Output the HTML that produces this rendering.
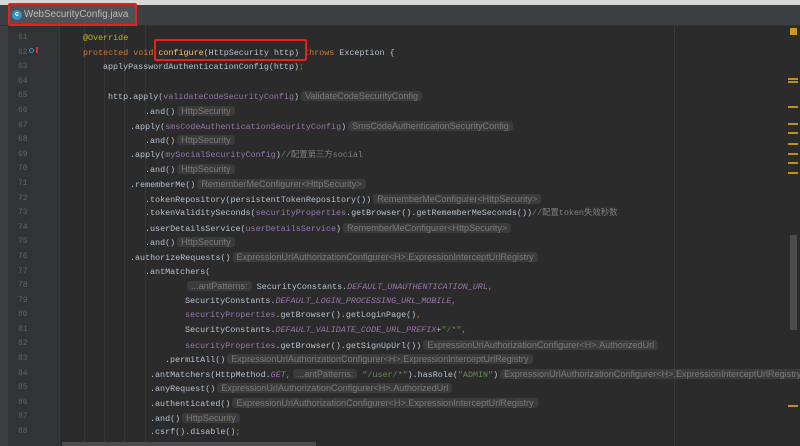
<!DOCTYPE html>
<html><head><meta charset="utf-8"><style>
*{margin:0;padding:0;box-sizing:border-box}
body{width:800px;height:446px;overflow:hidden;background:#2b2b2b;position:relative;font-family:"Liberation Mono","Noto Sans CJK SC",monospace;font-size:8.4px;color:#b5c2d0}
.top{position:absolute;left:0;top:0;width:800px;height:5px;background:#d8d8d8}
.tabs{position:absolute;left:0;top:5px;width:800px;height:21px;background:#3c3f41;border-bottom:1px solid #323232}
.tab{position:absolute;left:9px;top:0;width:128px;height:21px;background:#4e5254;border-bottom:2px solid #4a88c7}
.tab span{position:absolute;left:15px;top:4px;font-family:"Liberation Sans",sans-serif;font-size:9.8px;color:#bbbbbb}
.ic{position:absolute;left:3px;top:5px;width:10px;height:10px;border-radius:50%;background:#3592c4;color:#fff;font:bold 7px "Liberation Sans";text-align:center;line-height:10px}
.red{position:absolute;border:2px solid #e8201c;border-radius:2px}
.side{position:absolute;left:0;top:26px;width:8px;height:420px;background:#3c3f41}
.gut{position:absolute;left:8px;top:26px;width:52px;height:420px;background:#313335}
.ln{position:absolute;left:18px;color:#606366;font-size:8px}
.l{position:absolute;height:14.6px;line-height:14.6px;white-space:pre}
.k{color:#cc7832}.a{color:#bbb529}.p{color:#9876aa}.f{color:#ffc66d}.s{color:#6a8759}.i{font-style:italic;color:#9876aa}.c{color:#808080}
.h{font-family:"Liberation Sans",sans-serif;font-size:9.1px;color:#7a7a7a;background:#3b3b3b;border-radius:3px;padding:0 4px;margin-left:2px}
.margin{position:absolute;left:674px;top:26px;width:1px;height:420px;background:#3a3a3a}
.guide{position:absolute;top:26px;width:1px;height:420px;background:#363636}
.mk{position:absolute;left:788px;width:10px;height:2px;background:#be9117}
</style></head><body>
<div class="top"></div>
<div class="tabs"><div class="tab"><div class="ic">c</div><span>WebSecurityConfig.java</span></div></div>
<div class="side"></div>
<div class="gut"></div>
<div class="guide" style="left:59px;background:#3a3a3a"></div>
<div class="guide" style="left:84px"></div>
<div class="guide" style="left:104px"></div>
<div class="guide" style="left:124px"></div>
<div class="guide" style="left:145px"></div>
<div class="margin"></div>
<div style="position:absolute;left:790px;top:235px;width:7px;height:95px;background:#4a4c4e"></div>
<div style="position:absolute;left:62px;top:442px;width:254px;height:4px;background:#4a4c4e"></div>
<div style="position:absolute;left:790px;top:28px;width:7px;height:7px;background:#c69c1a"></div>
<div class="mk" style="top:78px"></div><div class="mk" style="top:81px"></div><div class="mk" style="top:106px"></div><div class="mk" style="top:123px"></div><div class="mk" style="top:132px"></div><div class="mk" style="top:143px"></div><div class="mk" style="top:153px"></div><div class="mk" style="top:162px"></div><div class="mk" style="top:172px"></div><div class="mk" style="top:405px"></div>
<div style="position:absolute;left:29px;top:48px;width:5px;height:5px;border-radius:50%;border:1.5px solid #3592c4"></div>
<div style="position:absolute;left:36px;top:47px;width:2px;height:6px;background:#c33"></div>

<div class="ln" style="top:31px;line-height:14.6px">61<br>62<br>63<br>64<br>65<br>66<br>67<br>68<br>69<br>70<br>71<br>72<br>73<br>74<br>75<br>76<br>77<br>78<br>79<br>80<br>81<br>82<br>83<br>84<br>85<br>86<br>87<br>88</div>

<div class="l" style="top:31px;left:83px"><span class="a">@Override</span></div>
<div class="l" style="top:45.6px;left:83px"><span class="k">protected void </span><span class="f">configure</span>(HttpSecurity http) <span class="k">throws </span>Exception {</div>
<div class="l" style="top:60.2px;left:103px">applyPasswordAuthenticationConfig(http)<span class="k">;</span></div>
<div class="l" style="top:89.4px;left:108px">http.apply(<span class="p">validateCodeSecurityConfig</span>)<span class="h">ValidateCodeSecurityConfig</span></div>
<div class="l" style="top:104px;left:145px">.and()<span class="h">HttpSecurity</span></div>
<div class="l" style="top:118.6px;left:130px">.apply(<span class="p">smsCodeAuthenticationSecurityConfig</span>)<span class="h">SmsCodeAuthenticationSecurityConfig</span></div>
<div class="l" style="top:133.2px;left:145px">.and()<span class="h">HttpSecurity</span></div>
<div class="l" style="top:147.8px;left:130px">.apply(<span class="p">mySocialSecurityConfig</span>)<span class="c">//配置第三方social</span></div>
<div class="l" style="top:162.4px;left:145px">.and()<span class="h">HttpSecurity</span></div>
<div class="l" style="top:177px;left:130px">.rememberMe()<span class="h">RememberMeConfigurer&lt;HttpSecurity&gt;</span></div>
<div class="l" style="top:191.6px;left:145px">.tokenRepository(persistentTokenRepository())<span class="h">RememberMeConfigurer&lt;HttpSecurity&gt;</span></div>
<div class="l" style="top:206.2px;left:145px">.tokenValiditySeconds(<span class="p">securityProperties</span>.getBrowser().getRememberMeSeconds())<span class="c">//配置token失效秒数</span></div>
<div class="l" style="top:220.8px;left:145px">.userDetailsService(<span class="p">userDetailsService</span>)<span class="h">RememberMeConfigurer&lt;HttpSecurity&gt;</span></div>
<div class="l" style="top:235.4px;left:145px">.and()<span class="h">HttpSecurity</span></div>
<div class="l" style="top:250px;left:130px">.authorizeRequests()<span class="h">ExpressionUrlAuthorizationConfigurer&lt;H&gt;.ExpressionInterceptUrlRegistry</span></div>
<div class="l" style="top:264.6px;left:145px">.antMatchers(</div>
<div class="l" style="top:279.2px;left:185px"><span class="h">...antPatterns:</span> SecurityConstants.<span class="i">DEFAULT_UNAUTHENTICATION_URL</span><span class="k">,</span></div>
<div class="l" style="top:293.8px;left:185px">SecurityConstants.<span class="i">DEFAULT_LOGIN_PROCESSING_URL_MOBILE</span><span class="k">,</span></div>
<div class="l" style="top:308.4px;left:185px"><span class="p">securityProperties</span>.getBrowser().getLoginPage()<span class="k">,</span></div>
<div class="l" style="top:323px;left:185px">SecurityConstants.<span class="i">DEFAULT_VALIDATE_CODE_URL_PREFIX</span>+<span class="s">"/*"</span><span class="k">,</span></div>
<div class="l" style="top:337.6px;left:185px"><span class="p">securityProperties</span>.getBrowser().getSignUpUrl())<span class="h">ExpressionUrlAuthorizationConfigurer&lt;H&gt;.AuthorizedUrl</span></div>
<div class="l" style="top:352.2px;left:165px">.permitAll()<span class="h">ExpressionUrlAuthorizationConfigurer&lt;H&gt;.ExpressionInterceptUrlRegistry</span></div>
<div class="l" style="top:366.8px;left:150px">.antMatchers(HttpMethod.<span class="i">GET</span><span class="k">,</span><span class="h">...antPatterns:</span> <span class="s">"/user/*"</span>).hasRole(<span class="s">"ADMIN"</span>)<span class="h">ExpressionUrlAuthorizationConfigurer&lt;H&gt;.ExpressionInterceptUrlRegistry</span></div>
<div class="l" style="top:381.4px;left:150px">.anyRequest()<span class="h">ExpressionUrlAuthorizationConfigurer&lt;H&gt;.AuthorizedUrl</span></div>
<div class="l" style="top:396px;left:150px">.authenticated()<span class="h">ExpressionUrlAuthorizationConfigurer&lt;H&gt;.ExpressionInterceptUrlRegistry</span></div>
<div class="l" style="top:410.6px;left:150px">.and()<span class="h">HttpSecurity</span></div>
<div class="l" style="top:425.2px;left:150px">.csrf().disable()<span class="k">;</span></div>

<div class="red" style="left:8px;top:3px;width:129px;height:23px"></div>
<div class="red" style="left:154px;top:39px;width:153px;height:22px"></div>
</body></html>
